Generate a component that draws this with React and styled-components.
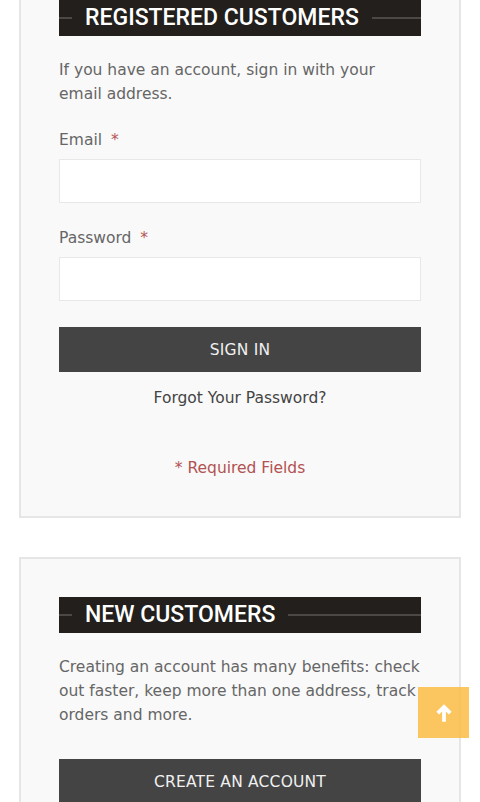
import styled, { createGlobalStyle } from 'styled-components';

const GlobalStyle = createGlobalStyle`
  html, body {
    margin: 0;
    padding: 0;
    background: #ffffff;
  }
  body {
    font-family: "DejaVu Sans", Verdana, sans-serif;
    font-size: 15.5px;
    overflow: hidden;
  }
`;

export default function App() {
  return (
    <>
      <GlobalStyle />
      <Page>
        <Card>
          <BlockTitle title="REGISTERED CUSTOMERS" />
          <Intro>If you have an account, sign in with your email address.</Intro>

          <Field $top={22}>
            <Label>
              Email <Star>*</Star>
            </Label>
            <Input type="email" />
          </Field>

          <Field $top={23}>
            <Label>
              Password <Star>*</Star>
            </Label>
            <Input type="password" />
          </Field>

          <Button $top={26}>SIGN IN</Button>
          <Forgot href="#">Forgot Your Password?</Forgot>
          <Required>* Required Fields</Required>
        </Card>

        <Card $gap={39}>
          <BlockTitle title="NEW CUSTOMERS" />
          <Intro>
            Creating an account has many benefits: check out faster, keep more
            than one address, track orders and more.
          </Intro>
          <Button $top={32}>CREATE AN ACCOUNT</Button>
        </Card>
      </Page>

      <ScrollTop aria-label="Back to top">
        <svg width="20" height="20" viewBox="0 0 18 20">
          <path
            d="M9 1.2 L1.4 8.8 L4.1 11.5 L7.1 8.5 L7.1 18.8 L10.9 18.8 L10.9 8.5 L13.9 11.5 L16.6 8.8 Z"
            fill="#ffffff"
          />
        </svg>
      </ScrollTop>
    </>
  );
}

function BlockTitle({ title }) {
  return (
    <TitleBar>
      <Rule $w="13px" />
      <TitleText>{title}</TitleText>
      <Rule $grow />
    </TitleBar>
  );
}

const Page = styled.div`
  padding: 0 19px 40px;
  margin-top: -40px;
`;

const Card = styled.div`
  background: #f9f9f9;
  border: 2px solid #e6e6e6;
  padding: 38px 38px 36px;
  margin-top: ${(p) => p.$gap || 0}px;
`;

const TitleBar = styled.div`
  height: 36px;
  background: #221f1c;
  display: flex;
  align-items: center;
`;

const Rule = styled.span`
  height: 2px;
  background: #4b4845;
  width: ${(p) => p.$w || 'auto'};
  flex: ${(p) => (p.$grow ? 1 : 'none')};
`;

const TitleText = styled.h2`
  margin: 0;
  padding: 0 13px;
  font-family: Roboto, "Liberation Sans", sans-serif;
  font-weight: 500;
  font-size: 23px;
  line-height: 36px;
  color: #ffffff;
  white-space: nowrap;
`;

const Intro = styled.p`
  margin: 22px 0 0;
  line-height: 24px;
  color: #666666;
`;

const Field = styled.div`
  margin-top: ${(p) => p.$top}px;
  display: flex;
  flex-direction: column;
  gap: 7px;
`;

const Label = styled.label`
  line-height: 24px;
  color: #666666;
`;

const Star = styled.span`
  color: #b65656;
  margin-left: 4px;
`;

const Input = styled.input`
  box-sizing: border-box;
  height: 44px;
  width: 100%;
  margin: 0;
  border: 1px solid #e8e8e8;
  background: #ffffff;
  outline: none;
`;

const Button = styled.button`
  display: block;
  width: 100%;
  height: 45px;
  margin-top: ${(p) => p.$top}px;
  border: none;
  background: #444444;
  color: #f0f0f0;
  font-family: "DejaVu Sans", Verdana, sans-serif;
  font-size: 15.5px;
  letter-spacing: 0.2px;
  cursor: pointer;
`;

const Forgot = styled.a`
  display: block;
  margin-top: 14px;
  text-align: center;
  line-height: 24px;
  color: #444444;
  text-decoration: none;
`;

const Required = styled.div`
  margin-top: 46px;
  text-align: center;
  line-height: 24px;
  color: #b25252;
`;

const ScrollTop = styled.button`
  position: fixed;
  right: 11px;
  bottom: 64px;
  width: 51px;
  height: 51px;
  border: none;
  padding: 0;
  background: rgba(251, 186, 62, 0.82);
  display: flex;
  align-items: center;
  justify-content: center;
  cursor: pointer;
`;
